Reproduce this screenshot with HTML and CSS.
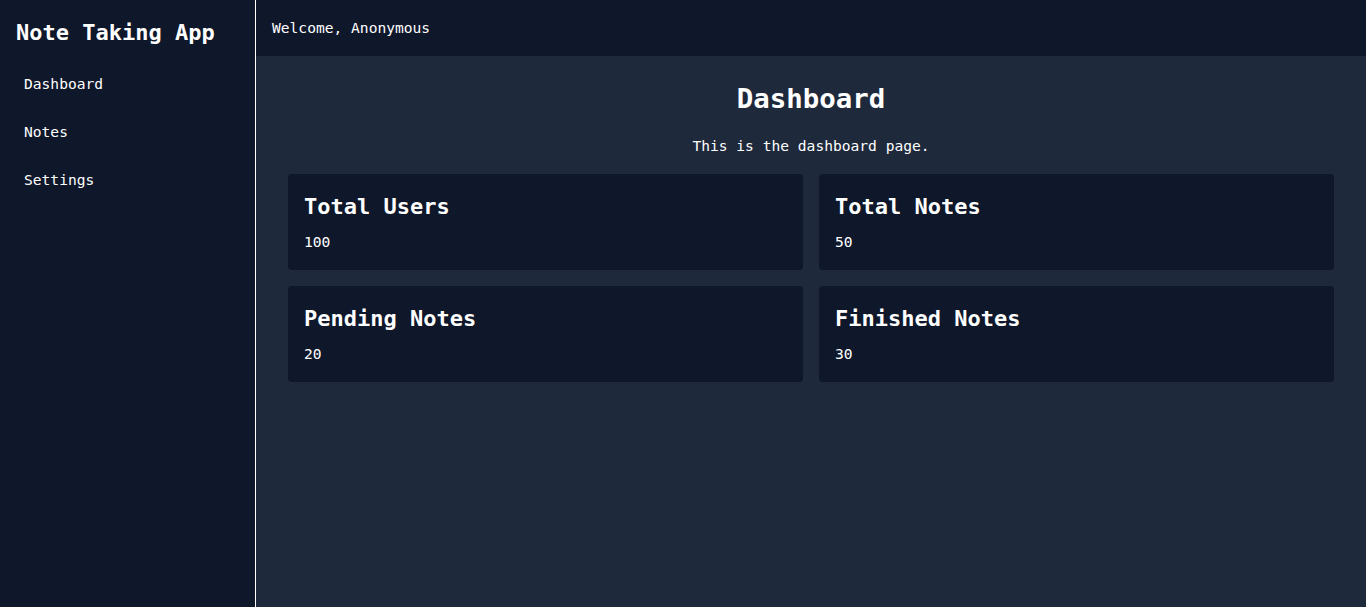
FILE: index.html
```html
<!DOCTYPE html>
<html lang="en">
<head>
<meta charset="utf-8">
<title>Note Taking App</title>
<link rel="stylesheet" href="styles.css">
</head>
<body>
<div class="app">
  <aside class="sidebar">
    <h1 class="brand">Note Taking App</h1>
    <nav class="nav">
      <a class="nav-link" href="#">Dashboard</a>
      <a class="nav-link" href="#">Notes</a>
      <a class="nav-link" href="#">Settings</a>
    </nav>
  </aside>
  <div class="main-wrap">
    <header class="topbar">Welcome, Anonymous</header>
    <main class="content">
      <h2 class="page-title">Dashboard</h2>
      <p class="page-desc">This is the dashboard page.</p>
      <div class="cards">
        <div class="card"><h3 class="card-title">Total Users</h3><p class="card-value">100</p></div>
        <div class="card"><h3 class="card-title">Total Notes</h3><p class="card-value">50</p></div>
        <div class="card"><h3 class="card-title">Pending Notes</h3><p class="card-value">20</p></div>
        <div class="card"><h3 class="card-title">Finished Notes</h3><p class="card-value">30</p></div>
      </div>
    </main>
  </div>
</div>
</body>
</html>
```
FILE: styles.css
```css
* { box-sizing: border-box; }
html, body { margin: 0; height: 100%; }
body {
  font-family: "DejaVu Sans Mono", "Liberation Mono", monospace;
  font-size: 14.6px;
  color: #ffffff;
  background: #1e293b;
}
.app { display: flex; height: 607px; }
.sidebar {
  width: 256px;
  flex: none;
  background: #0f172a;
  border-right: 1px solid #ffffff;
  padding: 16px;
}
.brand {
  margin: 0 0 15px;
  padding-top: 1px;
  font-size: 22px;
  line-height: 32px;
  font-weight: bold;
}
.nav { display: flex; flex-direction: column; gap: 8px; }
.nav-link {
  color: #ffffff;
  text-decoration: none;
  padding: 8px;
  line-height: 24px;
}
.main-wrap { flex: 1; display: flex; flex-direction: column; }
.topbar {
  height: 56px;
  background: #0f172a;
  padding: 16px;
  line-height: 24px;
}
.content { flex: 1; background: #1e293b; padding: 24px 32px; }
.page-title {
  margin: 0 0 17px;
  padding-top: 1px;
  text-align: center;
  font-size: 27.4px;
  line-height: 36px;
  font-weight: bold;
}
.page-desc { margin: 0 0 16px; text-align: center; line-height: 24px; }
.cards { display: grid; grid-template-columns: 1fr 1fr; gap: 16px; }
.card {
  background: #0f172a;
  border-radius: 4px;
  padding: 16px;
}
.card-title {
  margin: 0 0 7px;
  padding-top: 1px;
  font-size: 22px;
  line-height: 32px;
  font-weight: bold;
}
.card-value { margin: 0; line-height: 24px; }
```
